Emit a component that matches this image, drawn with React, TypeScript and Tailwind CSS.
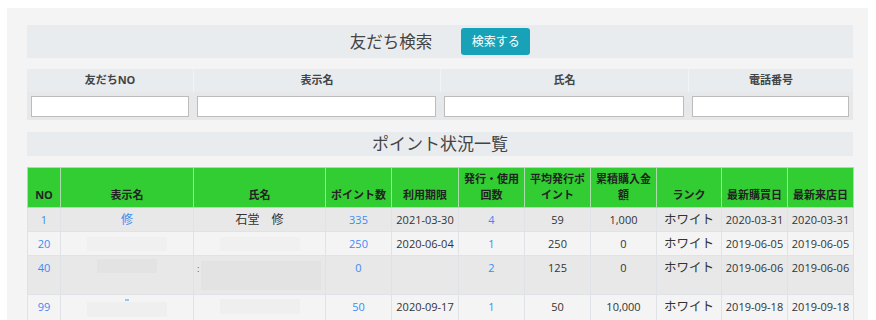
import React from 'react';

const font = { fontFamily: '"Open Sans", "Noto Sans CJK JP", sans-serif' };

const th =
  'border border-[#a9dea9] px-[2px] pt-[3px] pb-[4px] align-bottom text-center text-[11px] leading-[16px] font-bold text-[#222]';
const cell = 'border border-[#dfe3e7] px-[3px] py-[4px] align-top text-center text-[11px] leading-[15px]';
const td = `${cell} text-[#333]`;
const tdLink = `${cell} text-[#3c8bf5]`;

type Row = {
  no: string;
  disp: React.ReactNode;
  name: React.ReactNode;
  point: string;
  limit: string;
  count: string;
  avg: string;
  total: string;
  buy: string;
  visit: string;
  bg: string;
};

const rows: Row[] = [
  {
    no: '1',
    disp: <span className="text-[12px] text-[#3c8bf5]">修</span>,
    name: <span className="text-[12px]">石堂　修</span>,
    point: '335',
    limit: '2021-03-30',
    count: '4',
    avg: '59',
    total: '1,000',
    buy: '2020-03-31',
    visit: '2020-03-31',
    bg: 'bg-[#e8e8e8]',
  },
  {
    no: '20',
    disp: <div className="mx-auto mt-[1px] h-[14px] w-[80px] bg-[#f0f0f0]" />,
    name: <div className="mx-auto mt-[1px] h-[14px] w-[80px] bg-[#f0f0f0]" />,
    point: '250',
    limit: '2020-06-04',
    count: '1',
    avg: '250',
    total: '0',
    buy: '2019-06-05',
    visit: '2019-06-05',
    bg: 'bg-[#f4f4f4]',
  },
  {
    no: '40',
    disp: <div className="mx-auto mt-[-1px] h-[14px] w-[60px] bg-[#e3e3e3]" />,
    name: (
      <div className="flex items-start text-left">
        <span className="mt-[4px] text-[9px] leading-[9px] text-[#555]">:</span>
        <div className="mt-[1px] ml-[2px] h-[29px] w-[120px] bg-[#e3e3e3]" />
      </div>
    ),
    point: '0',
    limit: '',
    count: '2',
    avg: '125',
    total: '0',
    buy: '2019-06-06',
    visit: '2019-06-06',
    bg: 'bg-[#e8e8e8]',
  },
  {
    no: '99',
    disp: (
      <div className="mx-auto w-[80px]">
        <div className="mx-auto h-[2px] w-[4px] bg-[#9cc1f3]" />
        <div className="mt-[1px] h-[15px] w-[80px] bg-[#efefef]" />
      </div>
    ),
    name: <div className="mx-auto h-[15px] w-[80px] bg-[#efefef]" />,
    point: '50',
    limit: '2020-09-17',
    count: '1',
    avg: '50',
    total: '10,000',
    buy: '2019-09-18',
    visit: '2019-09-18',
    bg: 'bg-[#f4f4f4]',
  },
];

const searchCols = ['友だちNO', '表示名', '氏名', '電話番号'];

export default function App() {
  return (
    <div className="min-h-[320px] bg-white pt-[8px] pl-[7px]" style={font}>
      <div className="w-[861px] min-h-[320px] bg-[#f4f4f4] pt-[17px] pl-[20px] pr-[15px] pb-4">
        {/* search header */}
        <div className="flex h-[33px] items-center justify-center gap-[29px] bg-[#e9ecef]">
          <h2 className="text-[16.5px] leading-[24px] text-[#444]">友だち検索</h2>
          <button className="h-[27px] w-[69px] rounded-[3px] bg-[#17a2b8] text-[12px] text-white">
            検索する
          </button>
        </div>

        {/* search fields */}
        <div className="mt-[11px] grid grid-cols-[166px_247px_248px_165px]">
          {searchCols.map((c, i) => (
            <div
              key={c}
              className={`flex h-[23px] items-center justify-center bg-[#e9ecef] text-[11px] font-bold text-[#444] ${
                i > 0 ? 'border-l border-[#f1f3f5]' : ''
              }`}
            >
              {c}
            </div>
          ))}
          {searchCols.map((c) => (
            <div key={c + '-in'} className="flex h-[28px] items-center bg-[#e7e8e9] px-[4px]">
              <input className="h-[21px] w-full border border-[#bcbcbc] bg-white outline-none" />
            </div>
          ))}
        </div>

        {/* list header */}
        <div className="mt-[12px] flex h-[24px] items-center justify-center bg-[#e9ecef]">
          <h2 className="text-[17px] leading-[24px] text-[#444]">ポイント状況一覧</h2>
        </div>

        <table className="mt-[11px] w-[826px] table-fixed border-collapse">
          <colgroup>
            <col className="w-[33px]" />
            <col className="w-[133px]" />
            <col className="w-[132px]" />
            <col className="w-[66px]" />
            <col className="w-[67px]" />
            <col className="w-[66px]" />
            <col className="w-[66px]" />
            <col className="w-[66px]" />
            <col className="w-[65px]" />
            <col className="w-[66px]" />
            <col className="w-[66px]" />
          </colgroup>
          <thead>
            <tr className="bg-[#32cd32]">
              <th className={th}>NO</th>
              <th className={th}>表示名</th>
              <th className={th}>氏名</th>
              <th className={th}>ポイント数</th>
              <th className={th}>利用期限</th>
              <th className={th}>
                発行・使用
                <br />
                回数
              </th>
              <th className={th}>
                平均発行ポ
                <br />
                イント
              </th>
              <th className={th}>
                累積購入金
                <br />
                額
              </th>
              <th className={th}>ランク</th>
              <th className={th}>最新購買日</th>
              <th className={th}>最新来店日</th>
            </tr>
          </thead>
          <tbody>
            {rows.map((r) => (
              <tr key={r.no} className={r.bg}>
                <td className={tdLink}>{r.no}</td>
                <td className={td}>{r.disp}</td>
                <td className={td}>{r.name}</td>
                <td className={tdLink}>{r.point}</td>
                <td className={td}>{r.limit}</td>
                <td className={tdLink}>{r.count}</td>
                <td className={td}>{r.avg}</td>
                <td className={td}>{r.total}</td>
                <td className={`${cell} text-[12.5px] text-[#333]`}>ホワイト</td>
                <td className={td}>{r.buy}</td>
                <td className={td}>{r.visit}</td>
              </tr>
            ))}
          </tbody>
        </table>
      </div>
    </div>
  );
}
